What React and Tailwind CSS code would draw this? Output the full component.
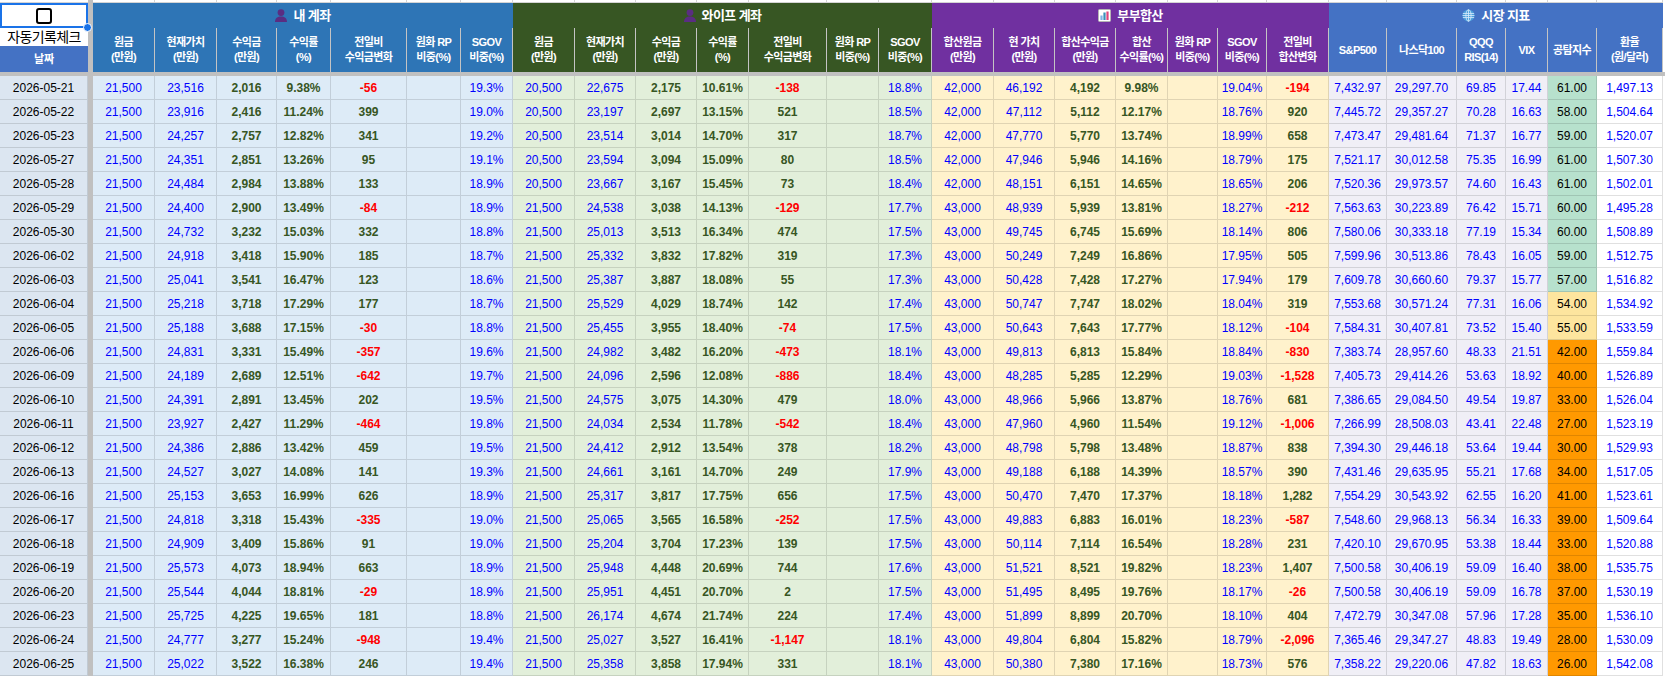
import React from "react";

// column widths per block (px), must add up with the frozen date column to 1665
const MY_W = ["w-[62px]", "w-[62px]", "w-[60px]", "w-[54px]", "w-[76px]", "w-[54px]", "w-[52px]"];
const WIFE_W = ["w-[62px]", "w-[61px]", "w-[61px]", "w-[52px]", "w-[78px]", "w-[52px]", "w-[53px]"];
const COUPLE_W = ["w-[62px]", "w-[61px]", "w-[61px]", "w-[52px]", "w-[50px]", "w-[49px]", "w-[62px]"];
const MARKET_W = ["w-[58px]", "w-[70px]", "w-[49px]", "w-[42px]", "w-[49px]", "w-[66px]"];

const ACCOUNT_LABELS = [
  ["원금", "(만원)"],
  ["현재가치", "(만원)"],
  ["수익금", "(만원)"],
  ["수익률", "(%)"],
  ["전일비", "수익금변화"],
  ["원화 RP", "비중(%)"],
  ["SGOV", "비중(%)"],
];
const COUPLE_LABELS = [
  ["합산원금", "(만원)"],
  ["현 가치", "(만원)"],
  ["합산수익금", "(만원)"],
  ["합산", "수익률(%)"],
  ["원화 RP", "비중(%)"],
  ["SGOV", "비중(%)"],
  ["전일비", "합산변화"],
];
const MARKET_LABELS = [["S&P500"], ["나스닥100"], ["QQQ", "RIS(14)"], ["VIX"], ["공탐지수"], ["환율", "(원/달러)"]];

const RAW = `
2026-05-21|21,500|23,516|2,016|9.38%|-56|19.3%|20,500|22,675|2,175|10.61%|-138|18.8%|42,000|46,192|4,192|9.98%|19.04%|-194|7,432.97|29,297.70|69.85|17.44|61.00|1,497.13
2026-05-22|21,500|23,916|2,416|11.24%|399|19.0%|20,500|23,197|2,697|13.15%|521|18.5%|42,000|47,112|5,112|12.17%|18.76%|920|7,445.72|29,357.27|70.28|16.63|58.00|1,504.64
2026-05-23|21,500|24,257|2,757|12.82%|341|19.2%|20,500|23,514|3,014|14.70%|317|18.7%|42,000|47,770|5,770|13.74%|18.99%|658|7,473.47|29,481.64|71.37|16.77|59.00|1,520.07
2026-05-27|21,500|24,351|2,851|13.26%|95|19.1%|20,500|23,594|3,094|15.09%|80|18.5%|42,000|47,946|5,946|14.16%|18.79%|175|7,521.17|30,012.58|75.35|16.99|61.00|1,507.30
2026-05-28|21,500|24,484|2,984|13.88%|133|18.9%|20,500|23,667|3,167|15.45%|73|18.4%|42,000|48,151|6,151|14.65%|18.65%|206|7,520.36|29,973.57|74.60|16.43|61.00|1,502.01
2026-05-29|21,500|24,400|2,900|13.49%|-84|18.9%|21,500|24,538|3,038|14.13%|-129|17.7%|43,000|48,939|5,939|13.81%|18.27%|-212|7,563.63|30,223.89|76.42|15.71|60.00|1,495.28
2026-05-30|21,500|24,732|3,232|15.03%|332|18.8%|21,500|25,013|3,513|16.34%|474|17.5%|43,000|49,745|6,745|15.69%|18.14%|806|7,580.06|30,333.18|77.19|15.34|60.00|1,508.89
2026-06-02|21,500|24,918|3,418|15.90%|185|18.7%|21,500|25,332|3,832|17.82%|319|17.3%|43,000|50,249|7,249|16.86%|17.95%|505|7,599.96|30,513.86|78.43|16.05|59.00|1,512.75
2026-06-03|21,500|25,041|3,541|16.47%|123|18.6%|21,500|25,387|3,887|18.08%|55|17.3%|43,000|50,428|7,428|17.27%|17.94%|179|7,609.78|30,660.60|79.37|15.77|57.00|1,516.82
2026-06-04|21,500|25,218|3,718|17.29%|177|18.7%|21,500|25,529|4,029|18.74%|142|17.4%|43,000|50,747|7,747|18.02%|18.04%|319|7,553.68|30,571.24|77.31|16.06|54.00|1,534.92
2026-06-05|21,500|25,188|3,688|17.15%|-30|18.8%|21,500|25,455|3,955|18.40%|-74|17.5%|43,000|50,643|7,643|17.77%|18.12%|-104|7,584.31|30,407.81|73.52|15.40|55.00|1,533.59
2026-06-06|21,500|24,831|3,331|15.49%|-357|19.6%|21,500|24,982|3,482|16.20%|-473|18.1%|43,000|49,813|6,813|15.84%|18.84%|-830|7,383.74|28,957.60|48.33|21.51|42.00|1,559.84
2026-06-09|21,500|24,189|2,689|12.51%|-642|19.7%|21,500|24,096|2,596|12.08%|-886|18.4%|43,000|48,285|5,285|12.29%|19.03%|-1,528|7,405.73|29,414.26|53.63|18.92|40.00|1,526.89
2026-06-10|21,500|24,391|2,891|13.45%|202|19.5%|21,500|24,575|3,075|14.30%|479|18.0%|43,000|48,966|5,966|13.87%|18.76%|681|7,386.65|29,084.50|49.54|19.87|33.00|1,526.04
2026-06-11|21,500|23,927|2,427|11.29%|-464|19.8%|21,500|24,034|2,534|11.78%|-542|18.4%|43,000|47,960|4,960|11.54%|19.12%|-1,006|7,266.99|28,508.03|43.41|22.48|27.00|1,523.19
2026-06-12|21,500|24,386|2,886|13.42%|459|19.5%|21,500|24,412|2,912|13.54%|378|18.2%|43,000|48,798|5,798|13.48%|18.87%|838|7,394.30|29,446.18|53.64|19.44|30.00|1,529.93
2026-06-13|21,500|24,527|3,027|14.08%|141|19.3%|21,500|24,661|3,161|14.70%|249|17.9%|43,000|49,188|6,188|14.39%|18.57%|390|7,431.46|29,635.95|55.21|17.68|34.00|1,517.05
2026-06-16|21,500|25,153|3,653|16.99%|626|18.9%|21,500|25,317|3,817|17.75%|656|17.5%|43,000|50,470|7,470|17.37%|18.18%|1,282|7,554.29|30,543.92|62.55|16.20|41.00|1,523.61
2026-06-17|21,500|24,818|3,318|15.43%|-335|19.0%|21,500|25,065|3,565|16.58%|-252|17.5%|43,000|49,883|6,883|16.01%|18.23%|-587|7,548.60|29,968.13|56.34|16.33|39.00|1,509.64
2026-06-18|21,500|24,909|3,409|15.86%|91|19.0%|21,500|25,204|3,704|17.23%|139|17.5%|43,000|50,114|7,114|16.54%|18.28%|231|7,420.10|29,670.95|53.38|18.44|33.00|1,520.88
2026-06-19|21,500|25,573|4,073|18.94%|663|18.9%|21,500|25,948|4,448|20.69%|744|17.6%|43,000|51,521|8,521|19.82%|18.23%|1,407|7,500.58|30,406.19|59.09|16.40|38.00|1,535.75
2026-06-20|21,500|25,544|4,044|18.81%|-29|18.9%|21,500|25,951|4,451|20.70%|2|17.5%|43,000|51,495|8,495|19.76%|18.17%|-26|7,500.58|30,406.19|59.09|16.78|37.00|1,530.19
2026-06-23|21,500|25,725|4,225|19.65%|181|18.8%|21,500|26,174|4,674|21.74%|224|17.4%|43,000|51,899|8,899|20.70%|18.10%|404|7,472.79|30,347.08|57.96|17.28|35.00|1,536.10
2026-06-24|21,500|24,777|3,277|15.24%|-948|19.4%|21,500|25,027|3,527|16.41%|-1,147|18.1%|43,000|49,804|6,804|15.82%|18.79%|-2,096|7,365.46|29,347.27|48.83|19.49|28.00|1,530.09
2026-06-25|21,500|25,022|3,522|16.38%|246|19.4%|21,500|25,358|3,858|17.94%|331|18.1%|43,000|50,380|7,380|17.16%|18.73%|576|7,358.22|29,220.06|47.82|18.63|26.00|1,542.08
`
  .trim()
  .split("\n")
  .map((line) => line.split("|"));

const BLUE = "text-[#0000ff]";
const GREEN = "text-[#375623] font-bold";
const RED = "text-[#ff0000] font-bold";

function PersonIcon() {
  return (
    <svg width="12" height="13" viewBox="0 0 12 13">
      <circle cx="6" cy="3.6" r="3.4" fill="#5a2d82" />
      <path d="M0 13c0-4 2.6-5.6 6-5.6s6 1.6 6 5.6z" fill="#5a2d82" />
    </svg>
  );
}

function ChartIcon() {
  return (
    <svg width="13" height="13" viewBox="0 0 13 13">
      <rect x="0.5" y="0.5" width="12" height="12" rx="1" fill="#fff" stroke="#b5b5b5" />
      <rect x="2.4" y="6.5" width="2.2" height="4.5" fill="#7fb2e5" />
      <rect x="5.4" y="3.5" width="2.2" height="7.5" fill="#3b8fb8" />
      <rect x="8.4" y="2.5" width="2.2" height="8.5" fill="#e0457b" />
    </svg>
  );
}

function GlobeIcon() {
  return (
    <svg width="13" height="13" viewBox="0 0 14 14">
      <circle cx="7" cy="7" r="6.4" fill="#4d9fdc" />
      <g fill="none" stroke="#d6ebfa" strokeWidth="0.9">
        <ellipse cx="7" cy="7" rx="2.8" ry="6.3" />
        <path d="M7 0.7v12.6M0.9 4.8h12.2M0.9 9.2h12.2M0.6 7h12.8" />
      </g>
    </svg>
  );
}

function Group({ title, icon, bg, widths, labels }) {
  return (
    <div className="flex flex-col shrink-0">
      <div className="flex h-[3px]">
        {widths.map((w, i) => (
          <div key={i} className={`${w} shrink-0 bg-white border-r border-b border-[#d4d4d4]`} />
        ))}
      </div>
      <div className={`h-[25px] ${bg} flex items-center justify-center gap-[6px] text-white text-[13px] font-bold tracking-[-0.6px]`}>
        {icon}
        <span>{title}</span>
      </div>
      <div className={`flex h-[44px] ${bg}`}>
        {widths.map((w, i) => (
          <div
            key={i}
            className={`${w} shrink-0 flex flex-col items-center justify-center border-r border-[#c4c4c4] text-white text-[11px] font-bold leading-[15px] tracking-[-0.6px] whitespace-nowrap`}
          >
            {labels[i].map((l) => (
              <span key={l}>{l}</span>
            ))}
          </div>
        ))}
      </div>
    </div>
  );
}

function Cell({ w, bg, color, children }) {
  return (
    <div
      className={`${w} shrink-0 flex items-center justify-center border-r border-b border-[#0000001f] ${bg} ${color} whitespace-nowrap`}
    >
      {children}
    </div>
  );
}

function fearBg(v) {
  const n = parseFloat(v);
  if (n >= 56) return "bg-[#b7e1cd]";
  if (n >= 45) return "bg-[#fde59e]";
  return "bg-[#ff9900]";
}

const diffColor = (v) => (v.startsWith("-") ? RED : GREEN);

function Row({ r }) {
  const my = r.slice(1, 7);
  const wife = r.slice(7, 13);
  const couple = r.slice(13, 19);
  const mk = r.slice(19, 25);

  const account = (vals, widths, bg) => [
    <Cell key="a" w={widths[0]} bg={bg} color={BLUE}>{vals[0]}</Cell>,
    <Cell key="b" w={widths[1]} bg={bg} color={BLUE}>{vals[1]}</Cell>,
    <Cell key="c" w={widths[2]} bg={bg} color={GREEN}>{vals[2]}</Cell>,
    <Cell key="d" w={widths[3]} bg={bg} color={GREEN}>{vals[3]}</Cell>,
    <Cell key="e" w={widths[4]} bg={bg} color={diffColor(vals[4])}>{vals[4]}</Cell>,
    <Cell key="f" w={widths[5]} bg={bg} color="" />,
    <Cell key="g" w={widths[6]} bg={bg} color={BLUE}>{vals[5]}</Cell>,
  ];

  return (
    <div className="flex h-[24px] text-[12px]">
      <Cell w="w-[88px]" bg="bg-[#dce6f1]" color="text-black">{r[0]}</Cell>
      <div className="w-[5px] shrink-0 bg-[#c0c0c0]" />
      {account(my, MY_W, "bg-[#ddebf7]")}
      {account(wife, WIFE_W, "bg-[#e2efda]")}
      <Cell w={COUPLE_W[0]} bg="bg-[#fff2cc]" color={BLUE}>{couple[0]}</Cell>
      <Cell w={COUPLE_W[1]} bg="bg-[#fff2cc]" color={BLUE}>{couple[1]}</Cell>
      <Cell w={COUPLE_W[2]} bg="bg-[#fff2cc]" color={GREEN}>{couple[2]}</Cell>
      <Cell w={COUPLE_W[3]} bg="bg-[#fff2cc]" color={GREEN}>{couple[3]}</Cell>
      <Cell w={COUPLE_W[4]} bg="bg-[#fff2cc]" color="" />
      <Cell w={COUPLE_W[5]} bg="bg-[#fff2cc]" color={BLUE}>{couple[4]}</Cell>
      <Cell w={COUPLE_W[6]} bg="bg-[#fff2cc]" color={diffColor(couple[5])}>{couple[5]}</Cell>
      <Cell w={MARKET_W[0]} bg="bg-[#f0eff6]" color={BLUE}>{mk[0]}</Cell>
      <Cell w={MARKET_W[1]} bg="bg-[#f0eff6]" color={BLUE}>{mk[1]}</Cell>
      <Cell w={MARKET_W[2]} bg="bg-[#f0eff6]" color={BLUE}>{mk[2]}</Cell>
      <Cell w={MARKET_W[3]} bg="bg-[#f0eff6]" color={BLUE}>{mk[3]}</Cell>
      <Cell w={MARKET_W[4]} bg={fearBg(mk[4])} color="text-black">{mk[4]}</Cell>
      <Cell w={MARKET_W[5]} bg="bg-white" color={BLUE}>{mk[5]}</Cell>
      <div className="w-[2px] shrink-0 bg-white" />
    </div>
  );
}

export default function App() {
  return (
    <div className="w-[1665px] h-[677px] overflow-hidden bg-white font-['Liberation_Sans','Noto_Sans_CJK_KR',sans-serif]">
      <div className="flex h-[72px]">
        <div className="w-[88px] shrink-0 flex flex-col">
          <div className="h-[3px] bg-white border-b border-[#d4d4d4]" />
          <div className="relative h-[25px] bg-white border-2 border-[#1a73e8] flex items-center justify-center">
            <div className="w-[16px] h-[16px] border-2 border-black rounded-[3px]" />
            <div className="absolute -right-[6px] -bottom-[6px] z-10 w-[9px] h-[9px] rounded-full bg-[#1a73e8] border border-white" />
          </div>
          <div className="h-[18px] bg-white flex items-center justify-center text-[14px] leading-none text-black whitespace-nowrap tracking-[-0.6px]">
            자동기록체크
          </div>
          <div className="h-[26px] bg-[#4472c4] flex items-center justify-center text-white text-[11px] font-bold">
            날짜
          </div>
        </div>
        <div className="w-[5px] shrink-0 bg-[#c0c0c0]" />
        <Group title="내 계좌" icon={<PersonIcon />} bg="bg-[#2e75b6]" widths={MY_W} labels={ACCOUNT_LABELS} />
        <Group title="와이프 계좌" icon={<PersonIcon />} bg="bg-[#375623]" widths={WIFE_W} labels={ACCOUNT_LABELS} />
        <Group title="부부합산" icon={<ChartIcon />} bg="bg-[#7030a0]" widths={COUPLE_W} labels={COUPLE_LABELS} />
        <Group title="시장 지표" icon={<GlobeIcon />} bg="bg-[#4472c4]" widths={MARKET_W} labels={MARKET_LABELS} />
        <div className="w-[2px] shrink-0 bg-white" />
      </div>
      <div className="h-[4px] bg-[#c0c0c0]" />
      {RAW.map((r) => (
        <Row key={r[0]} r={r} />
      ))}
    </div>
  );
}
